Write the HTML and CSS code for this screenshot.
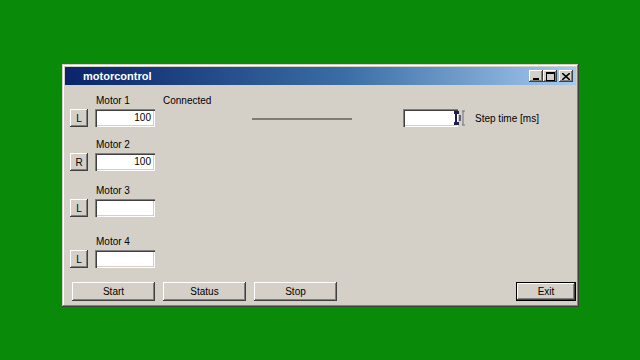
FILE: index.html
```html
<!DOCTYPE html>
<html lang="en">
<head>
    <meta charset="UTF-8">
    <title>motorcontrol</title>
    <link rel="stylesheet" href="styles.css">
</head>
<body>
    <div class="window">
        <div class="titlebar">
            <span class="title">motorcontrol</span>
            <div class="caption-btns">
                <span class="cap cap-min"><svg width="8" height="7" viewBox="0 0 8 7"><rect x="1" y="5" width="6" height="2" fill="#000"/></svg></span>
                <span class="cap cap-max"><svg width="9" height="9" viewBox="0 0 9 9"><rect x="0.5" y="0.5" width="8" height="8" fill="none" stroke="#000"/><rect x="0" y="0" width="9" height="2" fill="#000"/></svg></span>
                <span class="cap cap-close"><svg width="8" height="7" viewBox="0 0 8 7"><path d="M0 0 L8 7 M8 0 L0 7" stroke="#000" stroke-width="1.6"/></svg></span>
            </div>
        </div>

        <div class="client">
            <div class="top-row">
                <div class="motor">
                    <div class="motor-label">Motor 1</div>
                    <div class="motor-ctrl">
                        <button class="btn dir">L</button>
                        <div class="field">100</div>
                    </div>
                </div>
                <div class="status">Connected</div>
                <div class="progress"></div>
                <div class="step">
                    <div class="field step-field"></div>
                    <svg class="cursor" width="14" height="18" viewBox="0 0 14 18">
                        <path d="M2 2 h5 v3 h-2 v8 h2 v3 h-5 v-3 h1 v-8 h-1 z" fill="#1c2050"/>
                        <path d="M7 6 h2 v6 h-2 z" fill="#5a5e80"/>
                        <path d="M10 2 h3 M11 2 v14 M10 16 h3" stroke="#707070" stroke-width="1" fill="none"/>
                    </svg>
                    <span class="step-label">Step time [ms]</span>
                </div>
            </div>

            <div class="motor motor-2">
                <div class="motor-label">Motor 2</div>
                <div class="motor-ctrl">
                    <button class="btn dir">R</button>
                    <div class="field">100</div>
                </div>
            </div>

            <div class="motor motor-3">
                <div class="motor-label">Motor 3</div>
                <div class="motor-ctrl">
                    <button class="btn dir">L</button>
                    <div class="field"></div>
                </div>
            </div>

            <div class="motor motor-4">
                <div class="motor-label">Motor 4</div>
                <div class="motor-ctrl">
                    <button class="btn dir">L</button>
                    <div class="field"></div>
                </div>
            </div>

            <div class="actions">
                <button class="btn action">Start</button>
                <button class="btn action">Status</button>
                <button class="btn action">Stop</button>
                <button class="btn exit">Exit</button>
            </div>
        </div>
    </div>
</body>
</html>
```

FILE: styles.css
```css
body {
    margin: 0;
    padding: 64px 0 0 62px;
    background-color: #098a09;
    font-family: "Liberation Sans", Arial, sans-serif;
    font-size: 10px;
    color: #000;
}
.window {
    width: 517px;
    height: 243px;
    box-sizing: border-box;
    padding: 3px;
    background-color: #d4d0c8;
    box-shadow: inset -1px -1px #404040, inset 1px 1px #d4d0c8,
                inset -2px -2px #808080, inset 2px 2px #fff;
    display: flex;
    flex-direction: column;
}
.titlebar {
    height: 18px;
    display: flex;
    align-items: center;
    justify-content: space-between;
    background: linear-gradient(to right, #0a246a 0%, #3a6ea5 55%, #a6caf0 100%);
    padding: 0 3px 0 18px;
}
.title {
    color: #fff;
    font-weight: bold;
    font-size: 11px;
}
.caption-btns {
    display: flex;
}
.cap {
    width: 14px;
    height: 12px;
    box-sizing: border-box;
    background-color: #d4d0c8;
    display: flex;
    align-items: center;
    justify-content: center;
    box-shadow: inset -1px -1px #404040, inset 1px 1px #fff, inset -2px -2px #808080;
}
.cap-close {
    margin-left: 2px;
}
.client {
    flex: 1;
    padding: 10px 0 0 5px;
    display: flex;
    flex-direction: column;
}
.top-row {
    display: flex;
    align-items: flex-start;
}
.motor-label {
    padding-left: 26px;
    height: 12px;
    line-height: 12px;
    margin-bottom: 2px;
}
.motor-ctrl {
    display: flex;
    gap: 7px;
}
.btn {
    font-family: inherit;
    font-size: 10px;
    color: #000;
    background-color: #d4d0c8;
    border: none;
    padding: 0;
    box-shadow: inset -1px -1px #404040, inset 1px 1px #fff,
                inset -2px -2px #808080, inset 2px 2px #d4d0c8;
}
.dir {
    width: 18px;
    height: 18px;
}
.field {
    width: 60px;
    height: 18px;
    box-sizing: border-box;
    background-color: #fff;
    padding: 3px 4px 0 0;
    text-align: right;
    line-height: 12px;
    box-shadow: inset 1px 1px #808080, inset 2px 2px #404040,
                inset -1px -1px #fff, inset -2px -2px #d4d0c8;
}
.status {
    width: 89px;
    margin-left: 8px;
    line-height: 12px;
}
.progress {
    width: 100px;
    height: 2px;
    margin-top: 23px;
    background-color: #7c7c74;
}
.step {
    margin: 14px 0 0 51px;
    display: flex;
    align-items: center;
}
.step-field {
    width: 55px;
}
.cursor {
    margin-left: -6px;
}
.step-label {
    margin-left: 9px;
}
.motor-2 {
    margin-top: 12px;
}
.motor-3 {
    margin-top: 14px;
}
.motor-4 {
    margin-top: 19px;
}
.actions {
    margin-top: 14px;
    padding-left: 2px;
    display: flex;
    gap: 8px;
}
.action {
    width: 83px;
    height: 19px;
}
.exit {
    width: 60px;
    height: 19px;
    margin-left: auto;
    box-shadow: inset 1px 1px #000, inset -1px -1px #000,
                inset -2px -2px #404040, inset 2px 2px #fff, inset -3px -3px #808080;
}
```
